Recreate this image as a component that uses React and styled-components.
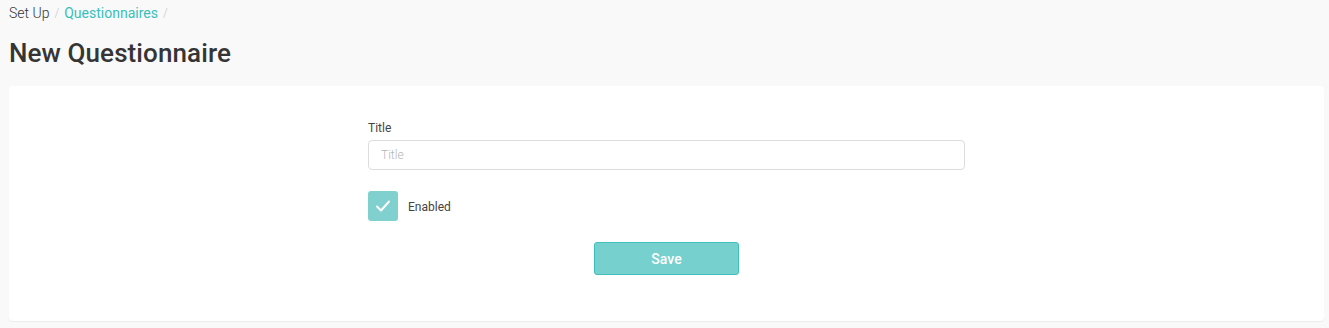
import { useState } from "react";
import styled, { createGlobalStyle } from "styled-components";

const GlobalStyle = createGlobalStyle`
  body {
    margin: 0;
    background: #f9f9f9;
    font-family: Roboto, "Liberation Sans", sans-serif;
    color: #333;
  }
  * { box-sizing: border-box; }
`;

const Page = styled.div`
  padding: 4px 9px 0 9px;
  width: 1329px;
  height: 328px;
`;

const Breadcrumb = styled.nav`
  display: flex;
  align-items: center;
  gap: 5px;
  font-size: 14px;
  line-height: 18px;
  font-weight: 300;
  color: #333;

  a {
    color: #38bfbc;
    text-decoration: none;
    font-weight: 400;
  }

  span.sep {
    color: #c8c8c8;
    font-size: 12px;
  }
`;

const Heading = styled.h1`
  margin: 17px 0 19px;
  font-size: 26px;
  line-height: 28px;
  font-weight: 500;
  color: #353535;
  letter-spacing: 0.1px;
`;

const Card = styled.section`
  background: #fff;
  border-radius: 4px;
  box-shadow: 0 1px 1px rgba(0, 0, 0, 0.06);
  width: 1315px;
  height: 235px;
  padding-top: 34px;
  display: flex;
  justify-content: center;
`;

const Form = styled.form`
  width: 597px;
  display: flex;
  flex-direction: column;
`;

const Label = styled.label`
  font-size: 12px;
  line-height: 16px;
  color: #444;
  margin-bottom: 4px;
`;

const Input = styled.input`
  height: 30px;
  border: 1px solid #dcdcdc;
  border-radius: 4px;
  padding: 0 12px;
  font-family: inherit;
  font-size: 12px;
  color: #333;
  outline: none;

  &::placeholder {
    color: #b4b4b4;
    font-weight: 300;
  }
`;

const CheckRow = styled.label`
  display: flex;
  align-items: center;
  gap: 10px;
  margin-top: 21px;
  font-size: 12px;
  color: #444;
  cursor: pointer;

  span.text {
    padding-top: 2px;
  }
`;

const Box = styled.span`
  width: 30px;
  height: 30px;
  border-radius: 3px;
  background: ${(p) => (p.$checked ? "#80d0d0" : "#fff")};
  border: ${(p) => (p.$checked ? "none" : "1px solid #dcdcdc")};
  display: flex;
  align-items: center;
  justify-content: center;
`;

const Actions = styled.div`
  display: flex;
  justify-content: center;
  margin-top: 21px;
`;

const SaveButton = styled.button`
  width: 145px;
  height: 33px;
  background: #76d0ce;
  border: 1px solid #3fc0bc;
  border-radius: 3px;
  color: #fff;
  font-family: inherit;
  font-size: 14px;
  font-weight: 500;
  cursor: pointer;
`;

export default function App() {
  const [enabled, setEnabled] = useState(true);
  return (
    <>
      <GlobalStyle />
      <Page>
        <Breadcrumb>
          <span>Set Up</span>
          <span className="sep">/</span>
          <a href="#">Questionnaires</a>
          <span className="sep">/</span>
        </Breadcrumb>
        <Heading>New Questionnaire</Heading>
        <Card>
          <Form onSubmit={(e) => e.preventDefault()}>
            <Label htmlFor="title">Title</Label>
            <Input id="title" placeholder="Title" />
            <CheckRow onClick={() => setEnabled(!enabled)}>
              <Box $checked={enabled}>
                {enabled && (
                  <svg width="16" height="14" viewBox="0 0 16 14" fill="none">
                    <path d="M2 7.5 L6 11.5 L14 2.5" stroke="#fff" strokeWidth="2" strokeLinecap="round" strokeLinejoin="round" />
                  </svg>
                )}
              </Box>
              <span className="text">Enabled</span>
            </CheckRow>
            <Actions>
              <SaveButton type="submit">Save</SaveButton>
            </Actions>
          </Form>
        </Card>
      </Page>
    </>
  );
}
